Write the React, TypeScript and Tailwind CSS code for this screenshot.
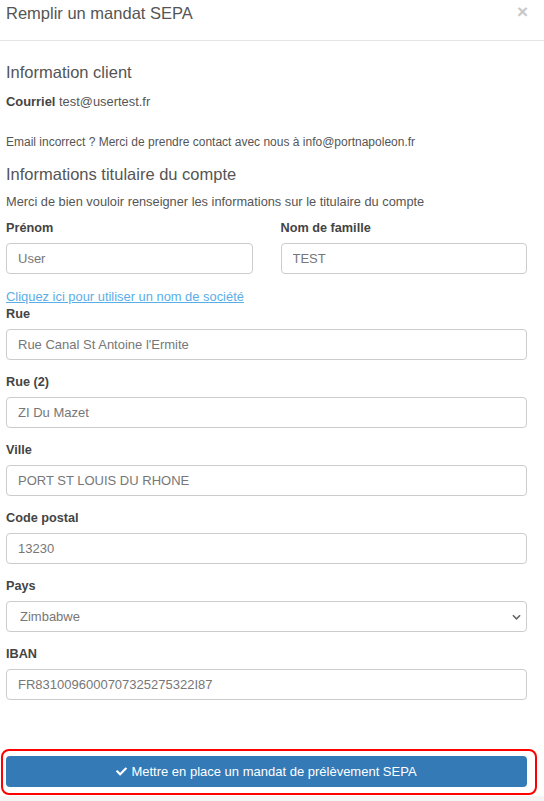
import React from 'react';
import { FaCheck } from 'react-icons/fa';

const Field: React.FC<{ label: string; value: string; className?: string }> = ({ label, value, className }) => (
  <div className={className}>
    <label className="block text-[12.7px] leading-[17px] font-bold text-[#444]">{label}</label>
    <input
      readOnly
      value={value}
      className="mt-[6px] block w-full h-[31px] rounded-[4px] border border-[#ccc] bg-white px-[11px] text-[13px] text-[#777] outline-none"
    />
  </div>
);

export default function App() {
  return (
    <div className="w-[544px] min-h-[801px] bg-white font-['Liberation_Sans',Arial,sans-serif] text-[#555] flex flex-col">
      {/* Header */}
      <div className="h-[41px] border-b border-[#e5e5e5] flex items-start justify-between pl-[6px] pr-[16px]">
        <h3 className="mt-[3px] text-[16.5px] leading-[20px] text-[#555]">Remplir un mandat SEPA</h3>
        <span className="mt-[2px] text-[19px] leading-[20px] font-bold text-[#c8c8c8]">×</span>
      </div>

      {/* Body */}
      <div className="pl-[6px] pr-[17px]">
        <h4 className="mt-[21px] text-[16.5px] leading-[20px]">Information client</h4>
        <p className="mt-[11px] text-[12.9px] leading-[17px]">
          <span className="font-bold text-[#444]">Courriel</span> test@usertest.fr
        </p>
        <p className="mt-[24px] text-[12px] leading-[17px]">
          Email incorrect ? Merci de prendre contact avec nous à info@portnapoleon.fr
        </p>
        <h4 className="mt-[13px] text-[16.5px] leading-[20px]">Informations titulaire du compte</h4>
        <p className="mt-[9px] text-[12.8px] leading-[17px]">
          Merci de bien vouloir renseigner les informations sur le titulaire du compte
        </p>

        <div className="mt-[10px] grid grid-cols-2 gap-x-[28px]">
          <Field label="Prénom" value="User" />
          <Field label="Nom de famille" value="TEST" />
        </div>

        <a href="#" className="mt-[14px] block text-[12.9px] leading-[17px] text-[#5aaee8] underline">
          Cliquez ici pour utiliser un nom de société
        </a>

        <Field label="Rue" value="Rue Canal St Antoine l'Ermite" className="mt-[1px]" />
        <Field label="Rue (2)" value="ZI Du Mazet" className="mt-[14px]" />
        <Field label="Ville" value="PORT ST LOUIS DU RHONE" className="mt-[14px]" />
        <Field label="Code postal" value="13230" className="mt-[14px]" />

        <div className="mt-[14px]">
          <label className="block text-[12.7px] leading-[17px] font-bold text-[#444]">Pays</label>
          <div className="relative mt-[6px]">
            <select
              defaultValue="ZW"
              className="block w-full h-[31px] appearance-none rounded-[4px] border border-[#ccc] bg-white pl-[13px] pr-[30px] text-[13px] text-[#777] outline-none"
            >
              <option value="ZW">Zimbabwe</option>
            </select>
            <svg
              viewBox="0 0 10 6"
              className="pointer-events-none absolute right-[6px] top-[13px] w-[9px] h-[6px]"
              fill="none"
              stroke="#666"
              strokeWidth="1.8"
            >
              <path d="M1 1l4 4 4-4" />
            </svg>
          </div>
        </div>

        <Field label="IBAN" value="FR8310096000707325275322I87" className="mt-[14px]" />
      </div>

      {/* Footer */}
      <div className="mt-[49px] ml-[1px] w-[536px] rounded-[8px] border-2 border-[#f00] pt-[5px] pb-[6px] pl-[3px] pr-[8px]">
        <button className="w-full h-[31px] rounded-[4px] bg-[#337ab7] text-white text-[13px] flex items-center justify-center gap-[4px]">
          <FaCheck className="w-[11px] h-[11px]" />
          Mettre en place un mandat de prélèvement SEPA
        </button>
      </div>
      <div className="flex-1 mt-[1px] bg-[#f5f5f5]" />
    </div>
  );
}
